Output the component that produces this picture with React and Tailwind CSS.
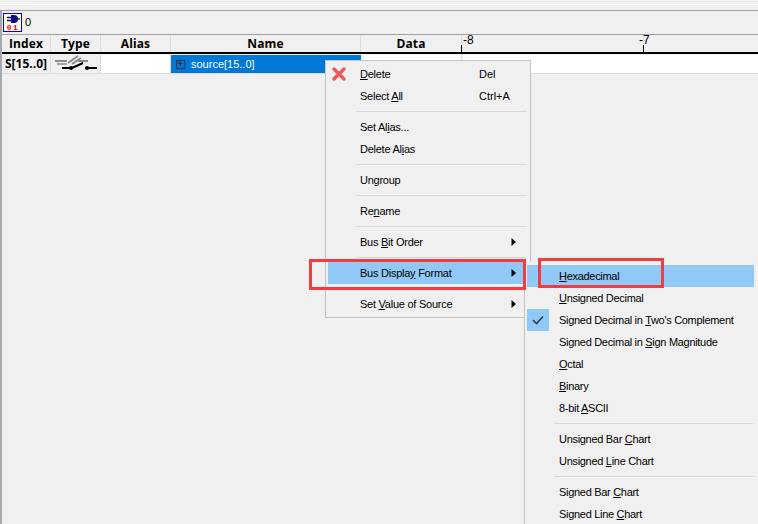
import React from 'react';

const font = "font-['Open_Sans','Noto_Sans',sans-serif]";
const menuFont = "font-['Liberation_Sans',Arial,sans-serif]";

const mainItems = [
  { icon: true, label: <><u>D</u>elete</>, shortcut: 'Del' },
  { label: <>Select <u>A</u>ll</>, shortcut: 'Ctrl+A' },
  { sep: true },
  { label: <>Set Al<u>i</u>as...</> },
  { label: <>Delete Al<u>i</u>as</> },
  { sep: true },
  { label: <>Un<u>g</u>roup</> },
  { sep: true },
  { label: <>Re<u>n</u>ame</> },
  { sep: true },
  { label: <>Bus <u>B</u>it Order</>, arrow: true },
  { sep: true },
  { label: <>Bus Displa<u>y</u> Format</>, arrow: true, active: true },
  { sep: true },
  { label: <>Set <u>V</u>alue of Source</>, arrow: true },
];

const formatItems = [
  { label: <><u>H</u>exadecimal</>, active: true },
  { label: <><u>U</u>nsigned Decimal</> },
  { label: <>Signed Decimal in <u>T</u>wo's Complement</>, checked: true },
  { label: <>Signed Decimal in <u>S</u>ign Magnitude</> },
  { label: <><u>O</u>ctal</> },
  { label: <><u>B</u>inary</> },
  { label: <>8-bit <u>A</u>SCII</> },
  { sep: true },
  { label: <>Unsigned Bar <u>C</u>hart</> },
  { label: <>Unsigned <u>L</u>ine Chart</> },
  { sep: true },
  { label: <>Signed Bar <u>C</u>hart</> },
  { label: <>Signed Line <u>C</u>hart</> },
];

const BusIcon = () => (
  <svg width="19" height="19" viewBox="0 0 19 19" className="block">
    <rect x="0.5" y="0.5" width="18" height="18" fill="#fff" stroke="#0000f0" />
    <path d="M4 4.5h4M4 7.5h4" stroke="#10107a" strokeWidth="1.4" />
    <path d="M8 2h3a4 4 0 0 1 0 8H8z" fill="#10107a" />
    <path d="M14 6h3" stroke="#10107a" strokeWidth="1.4" />
    <text x="10" y="17" textAnchor="middle" fontFamily="Liberation Mono" fontWeight="bold" fontSize="8" letterSpacing="1.5" fill="#e00000">01</text>
  </svg>
);

const TypeIcon = () => (
  <svg width="44" height="18" viewBox="0 1 44 18" className="block">
    <path d="M1 7h12M14 9L24 2M18 10L27 4M24 7h10" stroke="#8a8a8a" strokeWidth="2" fill="none" />
    <path d="M3 10h10" stroke="#8a8a8a" strokeWidth="1.5" fill="none" />
    <path d="M8 14h8M18 14L29 9M34 14h9" stroke="#000" strokeWidth="2" fill="none" />
    <circle cx="17" cy="14" r="2" fill="#000" />
    <circle cx="33" cy="14" r="2" fill="#000" />
  </svg>
);

const DeleteIcon = () => (
  <svg width="14" height="14" viewBox="0 0 14 14" className="block">
    <path d="M2 2l10 10M12 2L2 12" stroke="#f2555c" strokeWidth="3.4" strokeLinecap="round" />
  </svg>
);

const Arrow = () => (
  <svg width="5" height="8" viewBox="0 0 5 8" className="block">
    <path d="M0.5 0v8L5 4z" fill="#000" />
  </svg>
);

const Check = () => (
  <svg width="12" height="10" viewBox="0 0 12 10" className="block">
    <path d="M1 5l3.5 3.5L11 1.5" stroke="#2f3f50" strokeWidth="1.6" fill="none" />
  </svg>
);

const HeadCell = ({ className, children }) => (
  <div className={`flex h-full items-center justify-center border-r border-[#dcdcdc] text-[12px] font-bold tracking-[0.1px] ${className}`}>
    {children}
  </div>
);

const MainMenu = () => (
  <div className="absolute left-[325px] top-[60px] w-[206px] border border-[#c4c4c4] bg-[#f0f0f0] p-[2px]">
    {mainItems.map((item, i) =>
      item.sep ? (
        <div key={i} className="ml-[28px] mr-[1px] py-[4px]">
          <div className="h-px bg-[#d7d7d7]" />
        </div>
      ) : (
        <div key={i} className={`flex h-[22px] items-center ${item.active ? 'bg-[#90c8f6]' : ''}`}>
          <div className="flex w-[22px] justify-center">{item.icon && <DeleteIcon />}</div>
          <div className="w-[129px] pl-[10px] tracking-[-0.25px]">{item.label}</div>
          <div className="flex-1">{item.shortcut}</div>
          {item.arrow && <div className="mr-[12px]"><Arrow /></div>}
        </div>
      )
    )}
  </div>
);

const FormatMenu = () => (
  <div className="absolute left-[524px] top-[262px] h-[262px] w-[234px] overflow-hidden border-l border-[#c4c4c4] bg-[#f0f0f0] pl-[2px] pr-[4px] pt-[3px]">
    {formatItems.map((item, i) =>
      item.sep ? (
        <div key={i} className="ml-[28px] py-[4px]">
          <div className="h-px bg-[#d7d7d7]" />
        </div>
      ) : (
        <div key={i} className={`flex h-[22px] items-center ${item.active ? 'bg-[#90c8f6]' : ''}`}>
          <div className={`mr-[10px] flex h-[22px] w-[22px] shrink-0 items-center justify-center ${item.checked ? 'bg-[#90c8f6]' : ''}`}>
            {item.checked && <Check />}
          </div>
          <div className="whitespace-nowrap tracking-[-0.3px]">{item.label}</div>
        </div>
      )
    )}
  </div>
);

export default function App() {
  return (
    <div className={`relative flex h-[524px] w-[758px] flex-col overflow-hidden bg-[#f0f0f0] text-black ${font}`}>
      {/* top strip */}
      <div className="h-[4px] shrink-0" />
      <div className="h-px shrink-0 bg-white" />
      <div className="box-content h-[5px] shrink-0 border-b border-[#a0a0a0]" />

      <div className="flex flex-1 border-l-2 border-[#a8a8b0]">
        <div className="flex flex-1 flex-col">
          {/* toolbar */}
          <div className="flex h-[24px] shrink-0 items-center gap-[3px] border-b border-[#a0a0a0] pl-[1px] text-[11px]">
            <BusIcon />
            <span className={menuFont}>0</span>
          </div>

          {/* header */}
          <div className="flex h-[19px] shrink-0 border-b-2 border-black">
            <HeadCell className="w-[49px]">Index</HeadCell>
            <HeadCell className="w-[50px]">Type</HeadCell>
            <HeadCell className="w-[70px]">Alias</HeadCell>
            <HeadCell className="w-[190px]">Name</HeadCell>
            <HeadCell className="w-[100px] !border-r-0">Data</HeadCell>
            <div className={`flex flex-1 border-l border-[#dcdcdc] text-[12px] ${menuFont}`}>
              <div className="relative w-[177px] pl-[1px] leading-[10px]">
                -8
                <div className="absolute left-[-1px] top-[10px] h-[7px] w-px bg-black" />
              </div>
              <div className="relative leading-[10px]">
                -7
                <div className="absolute left-[4px] top-[10px] h-[7px] w-px bg-black" />
              </div>
            </div>
          </div>

          {/* signal row */}
          <div className="flex h-[20px] shrink-0 border-b border-[#dcdcdc] pt-px text-[12px]">
            <div className="flex w-[49px] items-center justify-center border-r border-[#dcdcdc] font-bold">S[15..0]</div>
            <div className="flex w-[50px] items-center justify-center border-r border-[#dcdcdc]"><TypeIcon /></div>
            <div className="w-[70px] border-r border-[#dcdcdc] bg-white" />
            <div className={`flex w-[190px] items-center bg-[#0078d7] pl-[5px] text-[11px] text-white ${menuFont}`}>
              <span className="flex h-[9px] w-[9px] items-center justify-center border border-[#333] text-[9px] leading-none text-black">+</span>
              <span className="ml-[6px]">source[15..0]</span>
            </div>
            <div className="w-[100px] bg-white" />
            <div className="flex-1 border-l border-[#dcdcdc] bg-white" />
          </div>
        </div>
      </div>

      <div className={`text-[11px] ${menuFont}`}>
        <MainMenu />
        <FormatMenu />
      </div>

      {/* red callouts */}
      <div className="absolute left-[309px] top-[259px] h-[31px] w-[217px] border-[3px] border-[#f43c3f]" />
      <div className="absolute left-[538px] top-[258px] h-[30px] w-[126px] border-[3px] border-[#f43c3f]" />
    </div>
  );
}
